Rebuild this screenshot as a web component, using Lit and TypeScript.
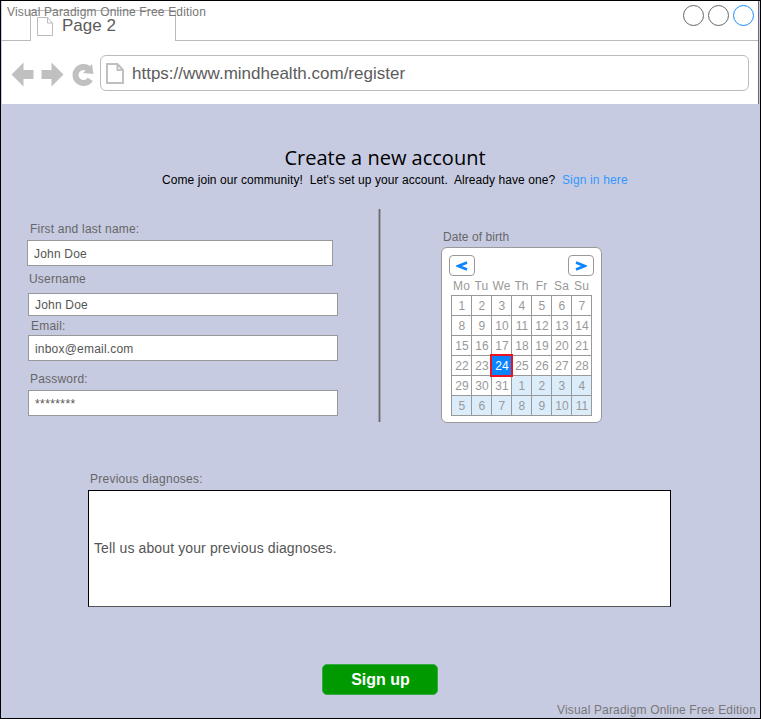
import { LitElement, html, css, svg } from "lit";
import { customElement } from "lit/decorators.js";
import { classMap } from "lit/directives/class-map.js";

@customElement("browser-chrome")
class BrowserChrome extends LitElement {
  static styles = css`
    :host { display: block; box-sizing: border-box; height: 103px; margin: 0 1px; background: #fff; border-right: 1px solid #666b7c; color: #5c5c5c; }
    .tabs { display: flex; height: 40px; }
    .edge { box-sizing: border-box; border-bottom: 1px solid #bbb; }
    .left { width: 28px; }
    .right { flex: 1; display: flex; justify-content: flex-end; gap: 4px; padding: 4px 4px 0 0; }
    .tab { box-sizing: border-box; width: 146px; margin-top: 9px; border: 1px solid #bbb; border-bottom: 0; display: flex; padding: 6px 0 0 6px; }
    .tab svg { flex: none; }
    .name { margin: -1px 0 0 9px; font-size: 17px; line-height: 20px; white-space: nowrap; }
    .dot { box-sizing: border-box; width: 21px; height: 21px; border: 1px solid #666; border-radius: 50%; }
    .dot.blue { border-color: #1a8cff; }
    .bar { display: flex; padding: 14px 9px 0 8px; }
    .nav { flex: none; margin-right: 4px; }
    .address { box-sizing: border-box; flex: 1; height: 36px; border: 1px solid #bbb; border-radius: 6px; display: flex; align-items: center; padding-left: 5px; font-size: 17px; }
    .url { margin-left: 8px; padding-top: 2px; }
  `;

  render() {
    return html`
      <div class="tabs">
        <div class="edge left"></div>
        <div class="tab">
          <svg width="16" height="19" viewBox="0 0 16 19"><path d="M.5.5H10.5L15.500 6V18.500H.5ZM10.500.5V6H15.500" fill="none" stroke="#bbb"/></svg>
          <span class="name">Page 2</span>
        </div>
        <div class="edge right">
          <div class="dot"></div><div class="dot"></div><div class="dot blue"></div>
        </div>
      </div>
      <div class="bar">
        <svg class="nav" width="86" height="36" viewBox="0 0 86 36">
          <g fill="#c0c0c0">
            <path d="M1.500 19.500 13.500 7.500V15H23.500V24H13.500V31.500Z"/>
            <path d="M53.500 19.500 41.500 7.500V15H31.500V24H41.500V31.500Z"/>
            <path d="M82 9 83.500 19 73 18Z"/>
          </g>
          <path d="M79.300 14.500A8 8 0 1 0 80.300 24.300" fill="none" stroke="#c0c0c0" stroke-width="6"/>
        </svg>
        <div class="address">
          <svg width="18" height="21" viewBox="0 0 18 21"><path d="M1 1H11.500L17 7V20H1ZM11.500 1V7H17" fill="none" stroke="#c0c0c0" stroke-width="2"/></svg>
          <span class="url">https://www.mindhealth.com/register</span>
        </div>
      </div>
    `;
  }
}

@customElement("text-field")
class TextField extends LitElement {
  static properties = { label: {}, value: {} };
  declare label: string;
  declare value: string;
  static styles = css`
    :host { display: block; color: #666; font-size: 12px; }
    .label { height: 14px; line-height: 14px; white-space: nowrap; padding-left: var(--indent, 2px); letter-spacing: 0.2px; }
    .box { box-sizing: border-box; height: var(--box, 26px); margin-top: var(--gap, 4px); background: #fff; border: 1px solid #999; padding: 1px 0 0 6px; display: flex; align-items: center; color: #555; letter-spacing: var(--spacing, 0.2px); }
  `;
  render() {
    return html`<div class="label">${this.label}</div><div class="box"><span>${this.value}</span></div>`;
  }
}

@customElement("date-picker")
class DatePicker extends LitElement {
  static styles = css`
    :host { box-sizing: border-box; display: block; width: 161px; height: 176px; background: #fff; border: 1px solid #999; border-radius: 6px; padding: 7px 7px 0; color: #999; font-size: 12px; }
    .controls { display: flex; justify-content: space-between; }
    .step { box-sizing: border-box; width: 26px; height: 21px; border: 1px solid #999; border-radius: 4px; display: flex; align-items: center; justify-content: center; }
    .days { display: grid; grid-template-columns: repeat(7, 20px); margin: 2px 0 0 2.500px; line-height: 17px; height: 17px; text-align: center; letter-spacing: 0.1px; }
    .grid { display: grid; grid-template-columns: repeat(7, 20px); grid-auto-rows: 20px; width: 140px; margin-left: 2px; border: solid #999; border-width: 1px 0 0 1px; }
    .cell { box-sizing: border-box; border: solid #999; border-width: 0 1px 1px 0; display: flex; align-items: center; justify-content: center; padding-left: 1px; letter-spacing: 0.1px; }
    .next { background: #dbecfb; }
    .chosen { position: relative; margin: -2px -1px -1px -2px; padding: 0 0 0 1px; border: 2px solid #ee1122; background: #0a84ff; color: #fff; }
  `;
  render() {
    const cells = Array.from({ length: 42 }, (_, i) => (i < 31 ? i + 1 : i - 30));
    return html`
      <div class="controls">
        ${["M11 1.500 2.500 5 11 8.500", "M1 1.500 9.500 5 1 8.500"].map(
          (d) => html`<div class="step"><svg width="12" height="10" viewBox="0 0 12 10">${svg`<path d=${d} fill="none" stroke="#0a84ff" stroke-width="2.600"/>`}</svg></div>`
        )}
      </div>
      <div class="days">${["Mo", "Tu", "We", "Th", "Fr", "Sa", "Su"].map((d) => html`<span>${d}</span>`)}</div>
      <div class="grid">
        ${cells.map((n, i) => html`<div class=${classMap({ cell: true, next: i > 30, chosen: i === 23 })}>${n}</div>`)}
      </div>
    `;
  }
}

@customElement("app-root")
class AppRoot extends LitElement {
  static styles = css`
    :host { position: relative; box-sizing: border-box; display: block; width: 761px; height: 719px; border: 1px solid #000; background: #c7cbe1; font-family: "Liberation Sans", Arial, sans-serif; color: #666; overflow: hidden; }
    .mark { position: absolute; font-size: 12px; line-height: 14px; color: #777; white-space: nowrap; letter-spacing: 0.165px; }
    .top { left: 6px; top: 4px; }
    .bottom { right: 4px; bottom: 1px; }
    h1 { margin: 41px 0 0 9px; text-align: center; font: 400 20px/26px "Open Sans", sans-serif; color: #000; }
    .intro { height: 16px; margin: 1px 0 0 161px; font-size: 12px; line-height: 16px; color: #000; white-space: pre; letter-spacing: 0.065px; }
    .link { color: #3399ff; letter-spacing: 0.15px; }
    .columns { display: flex; height: 213px; margin-top: 21px; }
    .form { width: 310px; padding: 13px 0 0 26px; }
    .first { width: 306px; --indent: 3px; }
    .user { margin: 6px 0 0 1px; width: 310px; --indent: 1px; --box: 23px; --gap: 7px; }
    .mail { margin: 3px 0 0 1px; width: 310px; --indent: 3px; --gap: 2px; }
    .pass { margin: 11px 0 0 1px; width: 310px; --gap: 4px; --spacing: 0.4px; }
    .divider { width: 1px; margin-left: 41px; background: #6c6c6c; border: solid #a0a2ac; border-width: 0 1px; }
    .birth { margin: 21px 0 0 60px; }
    .caption { height: 14px; padding: 0 0 0 2px; font-size: 12px; line-height: 14px; letter-spacing: 0.06px; }
    .birth date-picker { margin-top: 3px; }
    .history { margin: 50px 0 0 87px; width: 583px; font-size: 12px; }
    .history .caption { letter-spacing: 0.25px; }
    .area { box-sizing: border-box; height: 117px; margin-top: 4px; background: #fff; border: 1px solid #000; border-bottom-color: #555; display: flex; align-items: center; padding: 0 0 1px 5px; font-size: 14px; letter-spacing: 0.12px; color: #555; }
    .signup { display: block; width: 116px; height: 31px; margin: 57px 0 0 321px; padding: 0 0 0 1px; background: #009900; border: 1px solid #33aa44; border-radius: 5px; color: #fff; font: bold 16px/29px "Liberation Sans", Arial, sans-serif; }
  `;
  render() {
    return html`
      <browser-chrome></browser-chrome>
      <h1>Create a new account</h1>
      <div class="intro"><span>Come join our community!  Let's set up your account.  Already have one?  </span><span class="link">Sign in here</span></div>
      <div class="columns">
        <div class="form">
          <text-field class="first" label="First and last name:" value="John Doe"></text-field>
          <text-field class="user" label="Username" value="John Doe"></text-field>
          <text-field class="mail" label="Email:" value="inbox@email.com"></text-field>
          <text-field class="pass" label="Password:" value="********"></text-field>
        </div>
        <div class="divider"></div>
        <div class="birth">
          <div class="caption">Date of birth</div>
          <date-picker></date-picker>
        </div>
      </div>
      <div class="history">
        <div class="caption">Previous diagnoses:</div>
        <div class="area">Tell us about your previous diagnoses.</div>
      </div>
      <button class="signup">Sign up</button>
      <div class="mark top">Visual Paradigm Online Free Edition</div>
      <div class="mark bottom">Visual Paradigm Online Free Edition</div>
    `;
  }
}
